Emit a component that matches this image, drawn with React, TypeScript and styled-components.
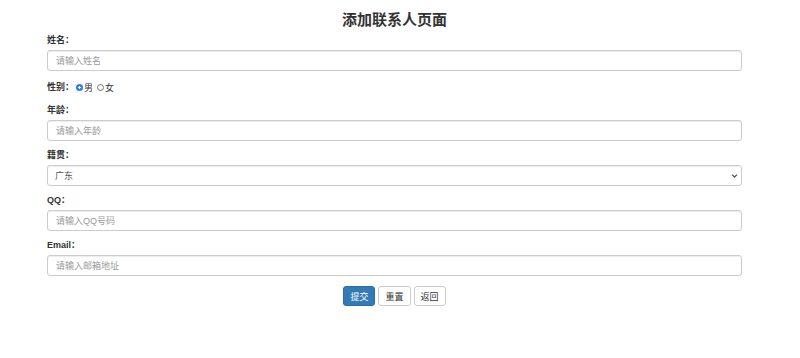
import React, { useState } from 'react'
import styled, { createGlobalStyle } from 'styled-components'

const GlobalStyle = createGlobalStyle`
  html, body {
    margin: 0;
    padding: 0;
    background: #fff;
  }
  body {
    font-family: "Liberation Sans", "Noto Sans CJK SC", sans-serif;
    color: #333;
  }
`

const Container = styled.div`
  width: 695px;
  margin: 0 0 0 47px;
  padding-top: 11px;
`

const Title = styled.h3`
  margin: 0 0 5px 0;
  text-align: center;
  font-size: 15px;
  line-height: 18px;
  font-weight: bold;
  color: #333;
`

const Group = styled.div`
  margin-bottom: 8px;
`

const InlineGroup = styled.div`
  display: flex;
  align-items: center;
  height: 16px;
  margin-bottom: 9px;
  font-size: 9px;
`

const Label = styled.label<{ $inline?: boolean }>`
  display: block;
  font-size: 9px;
  line-height: 13px;
  font-weight: bold;
  margin-bottom: ${p => (p.$inline ? '0' : '3px')};
  margin-right: ${p => (p.$inline ? '2px' : '0')};
`

const Input = styled.input`
  display: block;
  box-sizing: border-box;
  width: 100%;
  height: 21px;
  padding: 0 8px;
  font-size: 9px;
  font-family: inherit;
  color: #555;
  border: 1px solid #ccc;
  border-radius: 3px;
  box-shadow: inset 0 1px 1px rgba(0, 0, 0, 0.075);
  outline: none;
  &::placeholder {
    color: #999;
  }
`

const SelectWrap = styled.div`
  position: relative;
`

const Select = styled.select`
  display: block;
  box-sizing: border-box;
  width: 100%;
  height: 21px;
  padding: 0 7px;
  font-size: 9px;
  font-family: inherit;
  color: #555;
  background: #fff;
  border: 1px solid #ccc;
  border-radius: 3px;
  box-shadow: inset 0 1px 1px rgba(0, 0, 0, 0.075);
  appearance: none;
  outline: none;
`

const Chevron = styled.svg`
  position: absolute;
  right: 4px;
  top: 8px;
  pointer-events: none;
`

const Radio = styled.input`
  appearance: none;
  box-sizing: border-box;
  width: 7px;
  height: 7px;
  margin: 0 1px 0 0;
  border: 1px solid #777;
  border-radius: 50%;
  background: #fff;
  &:checked {
    border: none;
    background: radial-gradient(circle, #fff 0 1px, #2f7cf6 1.4px);
  }
`

const RadioText = styled.span`
  margin-right: 4px;
`

const Actions = styled.div`
  display: flex;
  justify-content: center;
  gap: 3px;
  margin-top: 10px;
`

const Btn = styled.button<{ $primary?: boolean }>`
  box-sizing: border-box;
  height: 20px;
  padding: 0 6px;
  font-size: 9px;
  font-family: inherit;
  border-radius: 3px;
  border: 1px solid ${p => (p.$primary ? '#2e6da4' : '#ccc')};
  background: ${p => (p.$primary ? '#337ab7' : '#fff')};
  color: ${p => (p.$primary ? '#fff' : '#333')};
  cursor: pointer;
`

const App: React.FC = () => {
  const [sex, setSex] = useState('男')

  return (
    <>
      <GlobalStyle />
      <Container>
        <Title>添加联系人页面</Title>
        <form onSubmit={e => e.preventDefault()}>
          <Group>
            <Label>姓名：</Label>
            <Input type="text" placeholder="请输入姓名" />
          </Group>
          <InlineGroup>
            <Label $inline>性别：</Label>
            <Radio type="radio" name="sex" checked={sex === '男'} onChange={() => setSex('男')} />
            <RadioText>男</RadioText>
            <Radio type="radio" name="sex" checked={sex === '女'} onChange={() => setSex('女')} />
            <RadioText>女</RadioText>
          </InlineGroup>
          <Group>
            <Label>年龄：</Label>
            <Input type="text" placeholder="请输入年龄" />
          </Group>
          <Group>
            <Label>籍贯：</Label>
            <SelectWrap>
              <Select defaultValue="广东">
                <option>广东</option>
                <option>广西</option>
                <option>湖南</option>
              </Select>
              <Chevron width="7" height="6" viewBox="0 0 10 8">
                <path d="M1.5 2 L5 5.5 L8.5 2" fill="none" stroke="#555" strokeWidth="1.8" />
              </Chevron>
            </SelectWrap>
          </Group>
          <Group>
            <Label>QQ：</Label>
            <Input type="text" placeholder="请输入QQ号码" />
          </Group>
          <Group>
            <Label>Email：</Label>
            <Input type="text" placeholder="请输入邮箱地址" />
          </Group>
          <Actions>
            <Btn $primary type="submit">提交</Btn>
            <Btn type="reset">重置</Btn>
            <Btn type="button">返回</Btn>
          </Actions>
        </form>
      </Container>
    </>
  )
}

export default App
